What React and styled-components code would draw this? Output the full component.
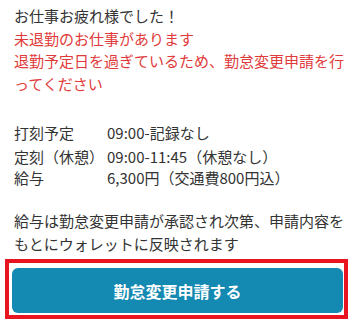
import React from 'react';
import styled, { createGlobalStyle } from 'styled-components';

const GlobalStyle = createGlobalStyle`
  body {
    margin: 0;
    background: #fff;
    font-family: "Noto Sans CJK JP", "Noto Sans", sans-serif;
  }
`;

const Page = styled.div`
  width: 354px;
  padding: 5px 0 0;
  box-sizing: border-box;
`;

const Message = styled.div`
  padding: 0 8px 0 14px;
  font-size: 15px;
  line-height: 22.5px;
`;

const Line = styled.p`
  margin: 0;
  color: ${(p) => (p.$alert ? '#e03a3a' : '#333')};
`;

const Schedule = styled.div`
  display: grid;
  grid-template-columns: 93px 1fr;
  padding: 25px 8px 0 14px;
  font-size: 15px;
  color: #333;
`;

const Label = styled.div`
  line-height: ${(p) => p.$h}px;
`;

const Value = styled.div`
  line-height: ${(p) => p.$h}px;
`;

const Note = styled.p`
  margin: 0;
  padding: 21px 8px 0 14px;
  font-size: 15px;
  line-height: 23px;
  color: #333;
`;

const Highlight = styled.div`
  margin: 4px 6px 0 5px;
  border: 4px solid #e8141f;
  padding: 5px 1px 2px 3px;
`;

const SubmitButton = styled.button`
  display: block;
  width: 100%;
  height: 45px;
  border: none;
  border-radius: 6px;
  background: #1489b1;
  color: #fff;
  font-family: "Noto Sans CJK JP", sans-serif;
  font-size: 16px;
  font-weight: 700;
  cursor: pointer;
`;

const rows = [
  { label: '打刻予定', value: '09:00-記録なし', h: 25 },
  { label: '定刻（休憩）', value: '09:00-11:45（休憩なし）', h: 23 },
  { label: '給与', value: '6,300円（交通費800円込）', h: 20 },
];

export default function App() {
  return (
    <Page>
      <GlobalStyle />
      <Message>
        <Line>お仕事お疲れ様でした！</Line>
        <Line $alert>未退勤のお仕事があります</Line>
        <Line $alert>退勤予定日を過ぎているため、勤怠変更申請を行ってください</Line>
      </Message>
      <Schedule>
        {rows.map((r) => (
          <React.Fragment key={r.label}>
            <Label $h={r.h}>{r.label}</Label>
            <Value $h={r.h}>{r.value}</Value>
          </React.Fragment>
        ))}
      </Schedule>
      <Note>給与は勤怠変更申請が承認され次第、申請内容をもとにウォレットに反映されます</Note>
      <Highlight>
        <SubmitButton>勤怠変更申請する</SubmitButton>
      </Highlight>
    </Page>
  );
}
